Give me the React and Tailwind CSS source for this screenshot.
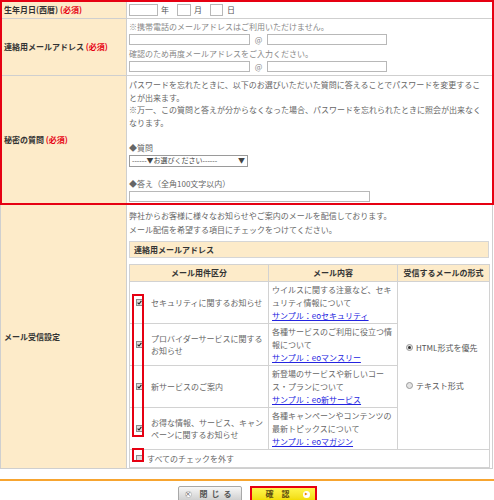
const Box = ({ className = '' }) => (
  <div className={`border border-[#b8b8b8] bg-white ${className}`} />
);

function Check({ checked = true }) {
  return (
    <span className="w-[7px] h-[7px] border border-[#8c8c8c] bg-[#dcdcdc] flex items-center justify-center shrink-0">
      {checked && (
        <svg width="5" height="5" viewBox="0 0 5 5">
          <path d="M0.6 2.6 L2 4 L4.4 0.8" stroke="#222" strokeWidth="1.1" fill="none" />
        </svg>
      )}
    </span>
  );
}

function Radio({ checked }) {
  return (
    <span className="w-[7px] h-[7px] rounded-full border border-[#9a9a9a] bg-[#e4e4e4] flex items-center justify-center shrink-0">
      {checked && <span className="w-[3px] h-[3px] rounded-full bg-[#333]" />}
    </span>
  );
}

function Label({ children, required }) {
  return (
    <div className="w-[125px] shrink-0 bg-[#fdebc9] border-r border-[#cfcfcf] flex items-center pl-[2px] font-bold text-[#333]">
      <span>
        {children}
        {required && <span className="text-[#e60012]"> (必須)</span>}
      </span>
    </div>
  );
}

const mails = [
  {
    name: 'セキュリティに関するお知らせ',
    desc: 'ウイルスに関する注意など、セキュリティ情報について',
    link: 'サンプル：eoセキュリティ',
  },
  {
    name: 'プロバイダーサービスに関するお知らせ',
    desc: '各種サービスのご利用に役立つ情報について',
    link: 'サンプル：eoマンスリー',
  },
  {
    name: '新サービスのご案内',
    desc: '新登場のサービスや新しいコース・プランについて',
    link: 'サンプル：eo新サービス',
  },
  {
    name: 'お得な情報、サービス、キャンペーンに関するお知らせ',
    desc: '各種キャンペーンやコンテンツの最新トピックスについて',
    link: 'サンプル：eoマガジン',
  },
];

export default function App() {
  return (
    <div className="w-[494px] h-[500px] bg-white text-[8px] text-[#666] font-['Noto_Sans_CJK_JP',sans-serif] overflow-hidden">
      {/* required block, outlined in red */}
      <div className="border-2 border-[#e60012]">
        {/* birthday */}
        <div className="flex h-[17px] border-b border-[#cfcfcf]">
          <Label required>生年月日(西暦)</Label>
          <div className="flex items-center pl-[2px] text-[#555]">
            <Box className="w-[29px] h-[12px]" />
            <span className="ml-[3px]">年</span>
            <Box className="w-[14px] h-[12px] ml-[8px]" />
            <span className="ml-[3px]">月</span>
            <Box className="w-[13px] h-[12px] ml-[8px]" />
            <span className="ml-[4px]">日</span>
          </div>
        </div>

        {/* contact mail */}
        <div className="flex border-b border-[#cfcfcf]">
          <Label required>連絡用メールアドレス</Label>
          <div className="pl-[2px] pt-[1px] pb-[2px] leading-[13px] text-[#888]">
            <p>※携帯電話のメールアドレスはご利用いただけません。</p>
            <div className="flex items-center">
              <Box className="w-[121px] h-[11px]" />
              <span className="w-[17px] text-center">@</span>
              <Box className="w-[120px] h-[11px]" />
            </div>
            <p className="mt-px">確認のため再度メールアドレスをご入力ください。</p>
            <div className="flex items-center">
              <Box className="w-[121px] h-[11px]" />
              <span className="w-[17px] text-center">@</span>
              <Box className="w-[120px] h-[11px]" />
            </div>
          </div>
        </div>

        {/* secret question */}
        <div className="flex">
          <Label required>秘密の質問</Label>
          <div className="flex-1 pl-[2px] pr-[2px] pt-[3px] pb-px leading-[12.5px] whitespace-nowrap">
            <p>
              パスワードを忘れたときに、以下のお選びいただいた質問に答えることでパスワードを変更するこ
              <br />
              とが出来ます。
            </p>
            <p>
              ※万一、この質問と答えが分からなくなった場合、パスワードを忘れられたときに照会が出来なく
              <br />
              なります。
            </p>
            <p className="mt-[13px]">◆質問</p>
            <div className="w-[119px] h-[12px] border border-[#9a9a9a] bg-white flex items-center justify-between px-[2px] text-[7px] text-[#444] leading-none">
              <span>------▼お選びください------</span>
              <span className="text-[7px]">▼</span>
            </div>
            <p className="mt-[11px]">◆答え（全角100文字以内）</p>
            <Box className="w-[241px] h-[11px] mt-px" />
          </div>
        </div>
      </div>

      {/* mail settings */}
      <div className="flex border border-t-0 border-[#cfcfcf] mr-px">
        <div className="w-[126px] shrink-0 bg-[#fdebc9] border-r border-[#cfcfcf] flex items-center pl-[3px] font-bold text-[#333]">
          メール受信設定
        </div>
        <div className="pl-[2px] pt-[4px]">
          <p className="leading-[14px] whitespace-nowrap">
            弊社からお客様に様々なお知らせやご案内のメールを配信しております。
            <br />
            メール配信を希望する項目にチェックをつけてください。
          </p>
          <div className="mt-[4px] w-[360px] h-[17px] border border-[#d6d6d6] bg-[#fdebc9] flex items-center pl-[4px] font-bold text-[#333]">
            連絡用メールアドレス
          </div>

          <div className="relative mt-[6px]">
            <table className="w-[360px] border-collapse table-fixed">
              <colgroup>
                <col className="w-[139px]" />
                <col className="w-[129px]" />
                <col className="w-[92px]" />
              </colgroup>
              <thead>
                <tr className="h-[17px] bg-[#fdebc9] font-bold text-[#333]">
                  <th className="border border-[#d2d2d2] font-bold">メール用件区分</th>
                  <th className="border border-[#d2d2d2] font-bold">メール内容</th>
                  <th className="border border-[#d2d2d2] font-bold">受信するメールの形式</th>
                </tr>
              </thead>
              <tbody>
                {mails.map((m, i) => (
                  <tr key={m.link} className="h-[42px]">
                    <td className="border border-[#d2d2d2] align-middle">
                      <div className="flex items-center pl-[6px]">
                        <Check />
                        <span className="ml-[8px] pr-[2px] leading-[12px]">{m.name}</span>
                      </div>
                    </td>
                    <td className="border border-[#d2d2d2] px-[3px] leading-[13px] align-middle">
                      <p>{m.desc}</p>
                      <a href="#" className="text-[#2424e0] underline">
                        {m.link}
                      </a>
                    </td>
                    {i === 0 && (
                      <td rowSpan={4} className="border border-[#d2d2d2] align-middle pl-[8px]">
                        <div className="flex flex-col gap-[26px] pt-[2px]">
                          <label className="flex items-center gap-[3px] text-[#555]">
                            <Radio checked />
                            HTML形式を優先
                          </label>
                          <label className="flex items-center gap-[3px] text-[#555]">
                            <Radio />
                            テキスト形式
                          </label>
                        </div>
                      </td>
                    )}
                  </tr>
                ))}
                <tr className="h-[18px]">
                  <td colSpan={3} className="border border-[#d2d2d2]">
                    <div className="flex items-center pl-[6px]">
                      <Check checked={false} />
                      <span className="ml-[4px]">すべてのチェックを外す</span>
                    </div>
                  </td>
                </tr>
              </tbody>
            </table>
            {/* highlight outlines */}
            <div className="absolute left-[3px] top-[30px] w-[12px] h-[143px] border-2 border-[#e60012]" />
            <div className="absolute left-[3px] top-[184px] w-[12px] h-[14px] border-2 border-[#e60012]" />
          </div>
        </div>
      </div>

      {/* buttons */}
      <div className="mt-[10px] border-t-2 border-[#f7a530] flex justify-center gap-[8px] pt-[5px] pb-px">
        <button className="w-[64px] h-[16px] rounded-[2px] border border-[#a8a8a8] bg-gradient-to-b from-[#f7f7f7] to-[#cdcdcd] flex items-center pl-[6px] font-bold text-[#555] text-[8px]">
          <span className="w-[7px] h-[7px] rounded-full bg-white border border-[#bbb] flex items-center justify-center text-[6px] leading-none text-[#777]">
            ×
          </span>
          <span className="ml-[8px] tracking-[4px]">閉じる</span>
        </button>
        <button className="w-[67px] h-[16px] border-2 border-[#e60012] bg-gradient-to-b from-[#fff64a] to-[#f2dc00] flex items-center justify-between pl-[14px] pr-[5px] font-bold text-[#5a4a10] text-[8px]">
          <span className="tracking-[8px]">確認</span>
          <span className="w-[7px] h-[7px] rounded-full bg-white flex items-center justify-center">
            <svg width="4" height="4" viewBox="0 0 4 4">
              <path d="M0.8 0.4 L3.6 2 L0.8 3.6 Z" fill="#f08a00" />
            </svg>
          </span>
        </button>
      </div>
      <div className="h-[4px] bg-[#cbcbcb] mt-px" />
    </div>
  );
}
